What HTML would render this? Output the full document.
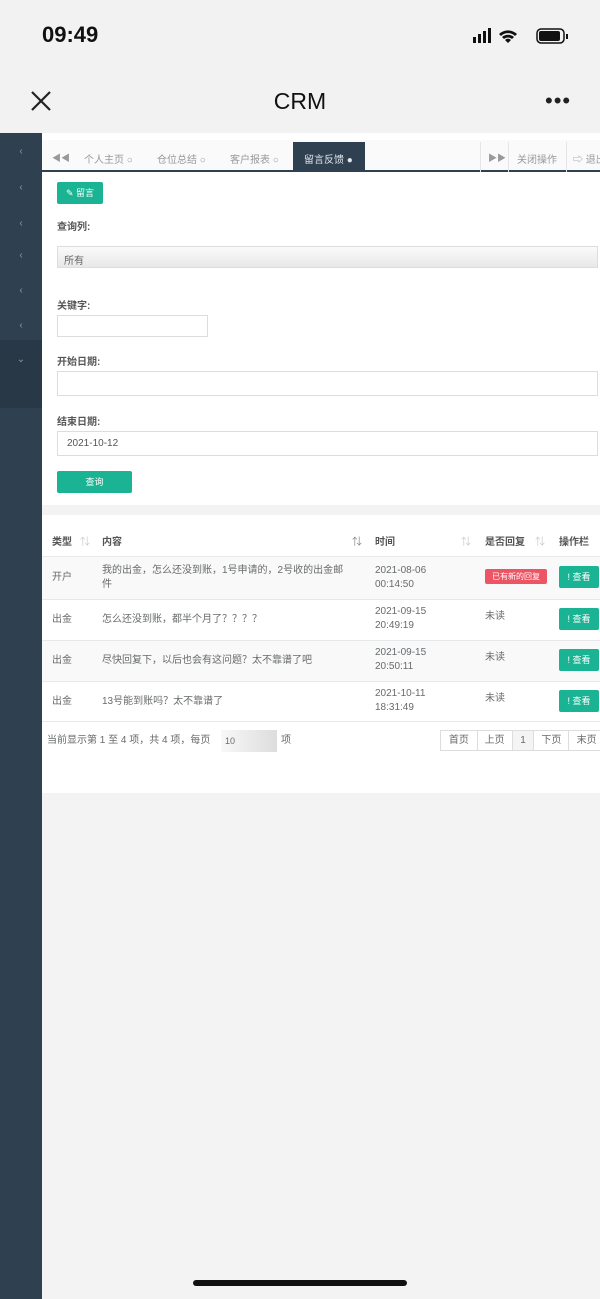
<!DOCTYPE html>
<html><head><meta charset="utf-8"><style>
*{margin:0;padding:0;box-sizing:border-box}
body{width:600px;height:1299px;position:relative;overflow:hidden;background:#f3f3f4;font-family:"Liberation Sans","Noto Sans CJK SC",sans-serif;color:#676a6c;font-size:11px}
.a{position:absolute;white-space:nowrap}
.top{left:0;top:0;width:600px;height:133px;background:#f2f2f2}
.side{left:0;top:133px;width:42px;height:1166px;background:#2f4050}
.chev{left:0;width:42px;text-align:center;color:#8a98a6;font-size:10px}
.w{background:#fff}
.lbl{left:57px;font-size:10px;color:#555;font-weight:bold}
.inp{left:57px;border:1px solid #ddd;background:#fff;height:22px}
.btn{background:#1ab394;color:#fff;border-radius:2px;text-align:center;font-size:9px}
.row{left:42px;width:558px;border-top:1px solid #e7eaec}
.c{position:absolute;font-size:10px;color:#676a6c;line-height:14px}
</style></head><body>
<div class="a top"></div>
<div class="a" style="left:42px;top:22px;font-size:22px;font-weight:bold;color:#111">09:49</div>
<svg class="a" style="left:473px;top:27px" width="100" height="18"><rect x="0" y="10" width="3" height="6" fill="#111"/><rect x="5" y="7" width="3" height="9" fill="#111"/><rect x="10" y="4" width="3" height="12" fill="#111"/><rect x="15" y="1" width="3" height="15" fill="#111"/><path d="M35 16l-3-3a4 4 0 016 0zM29 10a9 9 0 0112 0l-2 2a6 6 0 00-8 0zM26 7a13 13 0 0118 0l-2 2a10 10 0 00-14 0z" fill="#111"/><rect x="64" y="2" width="27" height="14" rx="4" fill="none" stroke="#111" stroke-width="1.5"/><rect x="66" y="4" width="21" height="10" rx="2" fill="#111"/><rect x="93" y="7" width="2" height="5" fill="#111"/></svg>
<svg class="a" style="left:30px;top:90px" width="22" height="22"><path d="M2 2L20 20M20 2L2 20" stroke="#222" stroke-width="2.2"/></svg>
<div class="a" style="left:0;width:600px;top:88px;text-align:center;font-size:23px;color:#111">CRM</div>
<div class="a" style="left:545px;top:88px;font-size:22px;color:#222;letter-spacing:1px">•••</div>
<div class="a side"></div>
<div class="a" style="left:0;top:340px;width:42px;height:68px;background:#293846"></div>
<div class="a chev" style="top:146px">‹</div><div class="a chev" style="top:182px">‹</div><div class="a chev" style="top:218px">‹</div><div class="a chev" style="top:250px">‹</div><div class="a chev" style="top:285px">‹</div><div class="a chev" style="top:320px">‹</div><div class="a chev" style="top:354px">⌄</div>
<div class="a w" style="left:42px;top:133px;width:558px;height:372px"></div>
<div class="a" style="left:42px;top:140px;width:558px;height:32px;background:#fafafa;border-bottom:2px solid #2f4050"></div>
<div class="a" style="left:52px;top:151px;font-size:9px;color:#999">◀◀</div>
<div class="a" style="left:84px;top:151px;font-size:10px;color:#999">个人主页 ○</div>
<div class="a" style="left:157px;top:151px;font-size:10px;color:#999">仓位总结 ○</div>
<div class="a" style="left:230px;top:151px;font-size:10px;color:#999">客户报表 ○</div>
<div class="a" style="left:293px;top:142px;width:72px;height:30px;background:#2f4050;color:#dfe4ea;font-size:10px;padding:9px 0 0 11px">留言反馈 ●</div>
<div class="a" style="left:480px;top:142px;width:1px;height:30px;background:#e5e5e5"></div>
<div class="a" style="left:488px;top:151px;font-size:9px;color:#999">▶▶</div>
<div class="a" style="left:508px;top:142px;width:1px;height:30px;background:#e5e5e5"></div>
<div class="a" style="left:517px;top:151px;font-size:10px;color:#999">关闭操作</div>
<div class="a" style="left:566px;top:142px;width:1px;height:30px;background:#e5e5e5"></div>
<div class="a" style="left:573px;top:151px;font-size:10px;color:#999">⇨ 退出</div>
<div class="a btn" style="left:57px;top:182px;width:46px;height:22px;line-height:22px">✎ 留言</div>
<div class="a lbl" style="top:218px">查询列:</div>
<div class="a inp" style="top:246px;width:541px;background:linear-gradient(#fafafa,#e8e8e8);font-size:10px;padding:5px 6px;color:#666">所有</div>
<div class="a lbl" style="top:297px">关键字:</div>
<div class="a inp" style="top:315px;width:151px"></div>
<div class="a lbl" style="top:353px">开始日期:</div>
<div class="a inp" style="top:371px;width:541px;height:25px"></div>
<div class="a lbl" style="top:413px">结束日期:</div>
<div class="a inp" style="top:431px;width:541px;height:25px;font-size:10px;padding:6px 9px;color:#555">2021-10-12</div>
<div class="a btn" style="left:57px;top:471px;width:75px;height:22px;line-height:22px">查询</div>
<div class="a w" style="left:42px;top:515px;width:558px;height:278px"></div>
<div class="c" style="left:52px;top:536px;color:#555;font-weight:bold">类型</div>
<div class="c" style="left:102px;top:536px;color:#555;font-weight:bold">内容</div>
<div class="c" style="left:375px;top:536px;color:#555;font-weight:bold">时间</div>
<div class="c" style="left:485px;top:536px;color:#555;font-weight:bold">是否回复</div>
<div class="c" style="left:559px;top:536px;color:#555;font-weight:bold">操作栏</div>
<div class="c" style="left:80px;top:536px;color:#ccc">⇅</div><div class="c" style="left:352px;top:536px;color:#888">⇅</div><div class="c" style="left:461px;top:536px;color:#ccc">⇅</div><div class="c" style="left:535px;top:536px;color:#ccc">⇅</div>
<div class="a row" style="top:556px;height:43px;background:#f9f9f9"></div>
<div class="a row" style="top:599px;height:41px"></div>
<div class="a row" style="top:640px;height:41px;background:#f9f9f9"></div>
<div class="a row" style="top:681px;height:41px;border-bottom:1px solid #e7eaec"></div>
<div class="c" style="left:52px;top:571px">开户</div>
<div class="c" style="left:102px;top:564px;width:250px">我的出金，怎么还没到账，1号申请的，2号收的出金邮件</div>
<div class="c" style="left:375px;top:564px">2021-08-06<br>00:14:50</div>
<div class="a" style="left:485px;top:569px;width:62px;height:15px;background:#ed5565;color:#fff;font-size:8px;text-align:center;line-height:15px;border-radius:2px">已有新的回复</div>
<div class="a btn" style="left:559px;top:566px;width:40px;height:22px;line-height:22px">! 查看</div>
<div class="c" style="left:52px;top:613px">出金</div>
<div class="c" style="left:102px;top:613px">怎么还没到账，都半个月了？？？？</div>
<div class="c" style="left:375px;top:605px">2021-09-15<br>20:49:19</div>
<div class="c" style="left:485px;top:610px">未读</div>
<div class="a btn" style="left:559px;top:608px;width:40px;height:22px;line-height:22px">! 查看</div>
<div class="c" style="left:52px;top:654px">出金</div>
<div class="c" style="left:102px;top:654px">尽快回复下，以后也会有这问题？太不靠谱了吧</div>
<div class="c" style="left:375px;top:646px">2021-09-15<br>20:50:11</div>
<div class="c" style="left:485px;top:651px">未读</div>
<div class="a btn" style="left:559px;top:649px;width:40px;height:22px;line-height:22px">! 查看</div>
<div class="c" style="left:52px;top:695px">出金</div>
<div class="c" style="left:102px;top:695px">13号能到账吗？太不靠谱了</div>
<div class="c" style="left:375px;top:687px">2021-10-11<br>18:31:49</div>
<div class="c" style="left:485px;top:692px">未读</div>
<div class="a btn" style="left:559px;top:690px;width:40px;height:22px;line-height:22px">! 查看</div>
<div class="c" style="left:47px;top:734px">当前显示第 1 至 4 项，共 4 项，每页</div>
<div class="a" style="left:221px;top:730px;width:56px;height:22px;background:linear-gradient(90deg,#f8f8f8,#ddd);font-size:9px;padding:6px 4px">10</div>
<div class="c" style="left:281px;top:734px">项</div>
<div class="a" style="left:440px;top:730px;width:165px;height:21px;border:1px solid #ddd;display:flex;font-size:10px">
<span style="width:37px;text-align:center;line-height:19px;border-right:1px solid #ddd">首页</span><span style="width:35px;text-align:center;line-height:19px;border-right:1px solid #ddd">上页</span><span style="width:22px;text-align:center;line-height:19px;border-right:1px solid #ddd;background:#f4f4f4">1</span><span style="width:35px;text-align:center;line-height:19px;border-right:1px solid #ddd">下页</span><span style="width:35px;text-align:center;line-height:19px">末页</span></div>
<div class="a" style="left:193px;top:1280px;width:214px;height:6px;border-radius:3px;background:#111"></div>
</body></html>
